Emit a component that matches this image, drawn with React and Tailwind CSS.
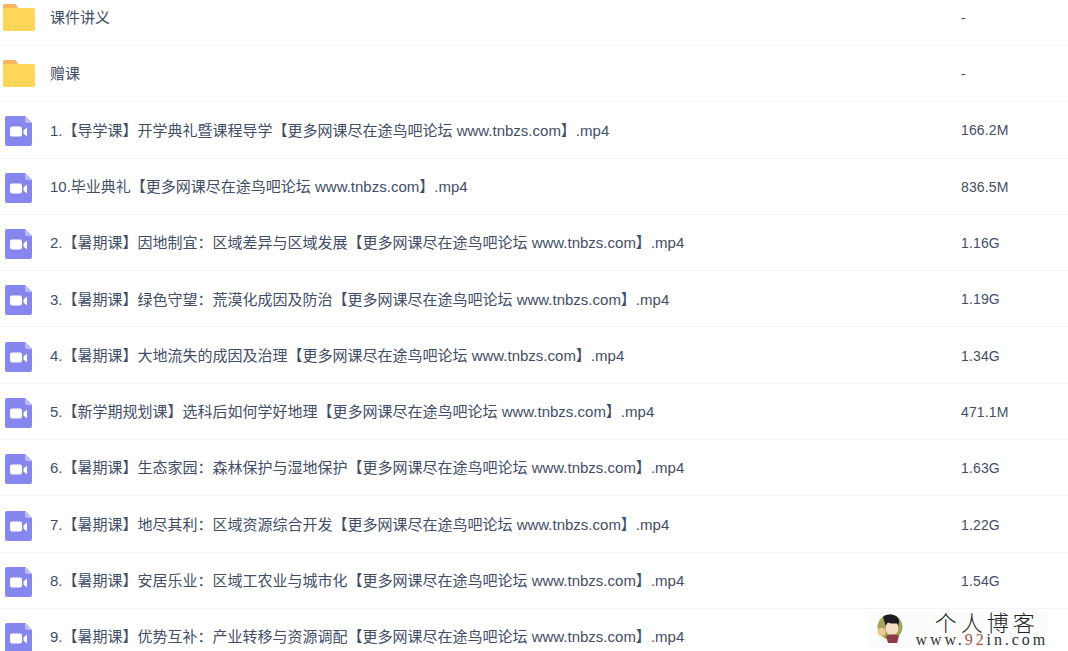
const files = [
  { name: '课件讲义', size: '-', type: 'folder' },
  { name: '赠课', size: '-', type: 'folder' },
  { name: '1.【导学课】开学典礼暨课程导学【更多网课尽在途鸟吧论坛 www.tnbzs.com】.mp4', size: '166.2M' },
  { name: '10.毕业典礼【更多网课尽在途鸟吧论坛 www.tnbzs.com】.mp4', size: '836.5M' },
  { name: '2.【暑期课】因地制宜：区域差异与区域发展【更多网课尽在途鸟吧论坛 www.tnbzs.com】.mp4', size: '1.16G' },
  { name: '3.【暑期课】绿色守望：荒漠化成因及防治【更多网课尽在途鸟吧论坛 www.tnbzs.com】.mp4', size: '1.19G' },
  { name: '4.【暑期课】大地流失的成因及治理【更多网课尽在途鸟吧论坛 www.tnbzs.com】.mp4', size: '1.34G' },
  { name: '5.【新学期规划课】选科后如何学好地理【更多网课尽在途鸟吧论坛 www.tnbzs.com】.mp4', size: '471.1M' },
  { name: '6.【暑期课】生态家园：森林保护与湿地保护【更多网课尽在途鸟吧论坛 www.tnbzs.com】.mp4', size: '1.63G' },
  { name: '7.【暑期课】地尽其利：区域资源综合开发【更多网课尽在途鸟吧论坛 www.tnbzs.com】.mp4', size: '1.22G' },
  { name: '8.【暑期课】安居乐业：区域工农业与城市化【更多网课尽在途鸟吧论坛 www.tnbzs.com】.mp4', size: '1.54G' },
  { name: '9.【暑期课】优势互补：产业转移与资源调配【更多网课尽在途鸟吧论坛 www.tnbzs.com】.mp4', size: '' },
]

function FolderIcon() {
  return (
    <svg width="32" height="27" viewBox="0 0 32 27" className="shrink-0">
      <path d="M0 2a2 2 0 0 1 2-2h9a3 3 0 0 1 3 2l1 2H0z" fill="#f9b65c" />
      <path d="M0 5a1 1 0 0 1 1-1h29a2 2 0 0 1 2 2v19a2 2 0 0 1-2 2H2a2 2 0 0 1-2-2z" fill="#ffd659" />
    </svg>
  )
}

function VideoIcon() {
  return (
    <svg width="27" height="30" viewBox="0 0 27 30" className="shrink-0">
      <path d="M2 0h18l7 7v21a2 2 0 0 1-2 2H2a2 2 0 0 1-2-2V2a2 2 0 0 1 2-2z" fill="#8587ee" />
      <path d="M20 0l7 7h-5a2 2 0 0 1-2-2z" fill="#b9baf6" />
      <rect x="5" y="10.5" width="12" height="10" rx="2" fill="#fff" />
      <path d="M18.5 14.5l3.5-3v9l-3.5-3z" fill="#fff" />
    </svg>
  )
}

function Row({ file, first }) {
  const folder = file.type === 'folder'
  return (
    <div className={`flex h-[56.3px] items-center border-b border-[#f4f5f9] ${first ? '-mt-[10.3px]' : ''}`}>
      <div className={`flex w-[50px] shrink-0 ${folder ? 'pl-[3px]' : 'pt-[3px] pl-[5px]'}`}>
        {folder ? <FolderIcon /> : <VideoIcon />}
      </div>
      <div className="flex-1 truncate pt-[2px] text-[15px]">{file.name}</div>
      <div className="w-[107px] shrink-0 pt-[2px] text-[14px] tracking-[0.15px]">{file.size}</div>
    </div>
  )
}

function Watermark() {
  return (
    <div className="absolute right-[20px] bottom-[4px] flex items-center gap-[11px] bg-[#fcfcfc] pl-[9px]">
      <svg width="28" height="30" viewBox="0 0 28 30">
        <circle cx="13" cy="13" r="12.5" fill="#a3a65a" />
        <path d="M6 3c4-4 14-3 16 3l-1 10-12-3z" fill="#1d1a24" />
        <ellipse cx="15" cy="14" rx="6.5" ry="7" fill="#f6dcc4" />
        <path d="M9 7c3 3 8 3 13 2l0-3-9-4z" fill="#1d1a24" />
        <path d="M9 22c3-2 10-2 13 0l-2 7H11z" fill="#8c3b46" />
        <circle cx="4.5" cy="18" r="4" fill="#eec993" />
      </svg>
      <div className="flex flex-col items-center font-['Liberation_Serif',serif] text-[#333]">
        <div className="pl-[10px] font-['Noto_Sans_CJK_SC',sans-serif] text-[22px] leading-[21px] font-light tracking-[4px] text-[#222]">个人博客</div>
        <div className="text-[16px] leading-[15px] font-medium tracking-[2.9px]">
          www.<span className="text-[#a8554a]">92</span>in.com
        </div>
      </div>
    </div>
  )
}

export default function App() {
  return (
    <div className="relative h-[651px] w-[1068px] overflow-hidden bg-white font-['Liberation_Sans','Noto_Sans_CJK_SC',sans-serif] text-[#424e67]">
      {files.map((file, i) => (
        <Row key={file.name} file={file} first={i === 0} />
      ))}
      <Watermark />
    </div>
  )
}
